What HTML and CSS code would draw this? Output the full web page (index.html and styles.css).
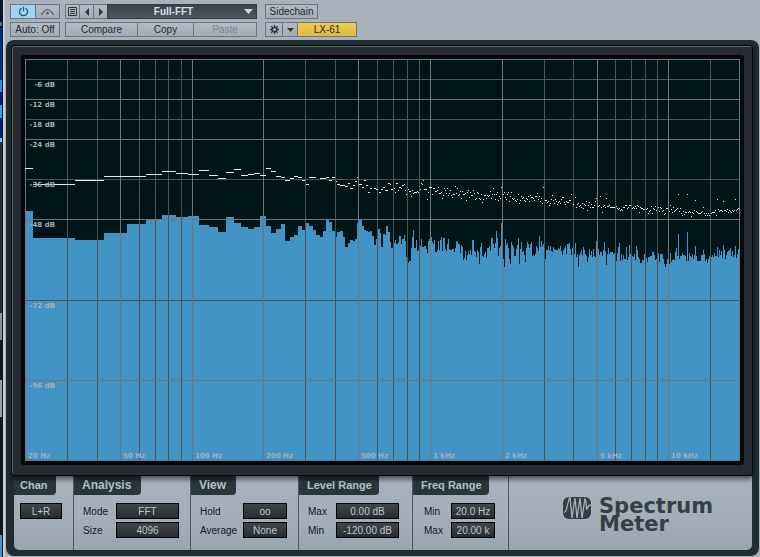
FILE: index.html
```html
<!DOCTYPE html>
<html lang="en">
<head>
  <meta charset="UTF-8">
  <meta name="viewport" content="width=device-width, initial-scale=1.0">
  <title>Spectrum Meter</title>
  <link rel="stylesheet" href="styles.css">
</head>
<body>
  <div class="desktop-edge"></div>
  <main class="plugin">
    <header class="toolbar">
      <div class="tool-col auto-col">
        <div class="group">
          <button class="btn power" aria-label="Power">
            <svg width="11" height="11" viewBox="0 0 11 11"><path d="M3.4 2.2a4 4 0 1 0 4.2 0M5.5 0.8v4.4" fill="none" stroke="#2c5878" stroke-width="1.3"/></svg>
          </button>
          <button class="btn curve" aria-label="Automation">
            <svg width="15" height="9" viewBox="0 0 15 9"><path d="M1 7.500C3.500 7 3.500 2.500 7.500 2.500S11.500 7 14 7.500" fill="none" stroke="#59616a" stroke-width="1.200"/><circle cx="7.500" cy="6" r="1.500" fill="#59616a"/></svg>
          </button>
        </div>
        <button class="btn">Auto: Off</button>
      </div>

      <div class="tool-col preset-col">
        <div class="group">
          <button class="btn icon" aria-label="Preset list">
            <svg width="9" height="9" viewBox="0 0 9 9"><path d="M.5 .5h8v8h-8zM2 2.500h5M2 4.500h5M2 6.500h5" fill="none" stroke="#30363d"/></svg>
          </button>
          <button class="btn icon" aria-label="Previous preset">
            <svg width="4" height="8" viewBox="0 0 4 8"><path d="M4 0v8L0 4z" fill="#30363d"/></svg>
          </button>
          <button class="btn icon" aria-label="Next preset">
            <svg width="4" height="8" viewBox="0 0 4 8"><path d="M0 0v8l4-4z" fill="#30363d"/></svg>
          </button>
          <div class="preset">
            <select aria-label="Preset"><option>Full-FFT</option></select>
            <svg class="arrow" width="9" height="5" viewBox="0 0 9 5"><path d="M0 0h9L4.500 5z" fill="#d5dade"/></svg>
          </div>
        </div>
        <div class="group">
          <button class="btn compare">Compare</button>
          <button class="btn copy">Copy</button>
          <button class="btn paste" disabled>Paste</button>
        </div>
      </div>

      <div class="tool-col">
        <button class="btn sidechain">Sidechain</button>
        <div class="group">
          <button class="btn gear" aria-label="Settings">
            <svg width="9" height="9" viewBox="0 0 9 9"><circle cx="4.500" cy="4.500" r="2.300" fill="none" stroke="#30363d" stroke-width="1.600"/><path d="M4.500 0v2M4.500 7v2M0 4.500h2M7 4.500h2M1.300 1.300l1.400 1.400M6.300 6.300l1.400 1.400M7.700 1.300L6.300 2.700M2.700 6.300L1.300 7.700" stroke="#30363d" stroke-width="1.300"/></svg>
          </button>
          <button class="btn drop" aria-label="Device menu">
            <svg width="7" height="4" viewBox="0 0 7 4"><path d="M0 0h7L3.500 4z" fill="#30363d"/></svg>
          </button>
          <button class="btn device">LX-61</button>
        </div>
      </div>
    </header>

    <section class="case">
      <div class="screen">
        <div class="plot">
          <svg class="graph" viewBox="25 59 715 402" preserveAspectRatio="none" shape-rendering="crispEdges">
            <path id="spectrum" class="spectrum"/>
            <g id="grid"></g>
            <path id="peaks" class="peaks"/>
          </svg>
          <div class="labels" id="labels"></div>
        </div>
      </div>

      <div class="controls">
        <fieldset class="box chan">
          <legend class="tab">Chan</legend>
          <div class="fields">
            <div class="field"><select class="short" aria-label="Channel"><option>L+R</option></select></div>
          </div>
        </fieldset>
        <fieldset class="box analysis">
          <legend class="tab big">Analysis</legend>
          <div class="fields">
            <div class="field"><label for="mode">Mode</label><select id="mode"><option>FFT</option></select></div>
            <div class="field"><label for="size">Size</label><select id="size"><option>4096</option></select></div>
          </div>
        </fieldset>
        <fieldset class="box view">
          <legend class="tab big">View</legend>
          <div class="fields">
            <div class="field"><label for="hold">Hold</label><input id="hold" class="short" type="text" value="oo"></div>
            <div class="field"><label for="average">Average</label><select id="average" class="short"><option>None</option></select></div>
          </div>
        </fieldset>
        <fieldset class="box level">
          <legend class="tab">Level Range</legend>
          <div class="fields">
            <div class="field"><label for="level-max">Max</label><input id="level-max" type="text" value="0.00 dB"></div>
            <div class="field"><label for="level-min">Min</label><input id="level-min" type="text" value="-120.00 dB"></div>
          </div>
        </fieldset>
        <fieldset class="box freq">
          <legend class="tab">Freq Range</legend>
          <div class="fields">
            <div class="field"><label for="freq-min">Min</label><input id="freq-min" class="short" type="text" value="20.0 Hz"></div>
            <div class="field"><label for="freq-max">Max</label><input id="freq-max" class="short" type="text" value="20.00 k"></div>
          </div>
        </fieldset>
        <div class="brand">
          <svg width="28" height="22" viewBox="0 0 28 22">
            <rect width="28" height="22" rx="6" fill="#353c42"/>
            <path d="M1 15C4 16 4 6 7 0l2 21L12 1l2 20L17 1l2 20L22 2c2 3 1 12 2 10s1-4 4-4" fill="none" stroke="#a8b1ba" stroke-width="1.300"/>
          </svg>
          <h1>Spectrum<br>Meter</h1>
        </div>
      </div>
    </section>
  </main>
  <script src="script.js"></script>
</body>
</html>
```
FILE: styles.css
```css
* {
  margin: 0;
  padding: 0;
  box-sizing: border-box;
}

body {
  display: flex;
  min-height: 100vh;
  background: #a9b1bb;
  font-family: "Liberation Sans", Arial, sans-serif;
  font-size: 10px;
}

/* what shows of the desktop beside the plugin window */
.desktop-edge {
  width: 3px;
  border-right: 1px solid #10151b;
  background: linear-gradient(#08172e 0 22px, #53677c 22px 26px, #08172e 26px 28px, #02318d 28px 80px, #2c8cf0 80px 92px, #001e70 92px 105px, #3c9cf5 105px 118px, #001e70 118px 138px, #5bd4f5 138px 142px, #282e38 142px 313px, #8c9298 313px 340px, #14181c 340px 380px, #9aa0a5 380px 417px, #12171d 417px 535px, #4a94c4 535px);
}

.plugin {
  flex: 1;
  min-width: 0;
  padding: 4px 1px 1px;
  border-left: 2px solid #c6ced6;
  background: #a9b1bb;
}

/* Toolbar */
.toolbar {
  display: flex;
  height: 36px;
  padding-left: 4px;
}

.tool-col {
  display: flex;
  flex-direction: column;
  gap: 3px;
}

.auto-col {
  width: 50px;
  margin-right: 5px;
}

.preset-col {
  width: 192px;
  margin-right: 8px;
}

.group {
  display: flex;
}

.group > * + * {
  margin-left: -1px;
}

.btn {
  display: flex;
  align-items: center;
  justify-content: center;
  height: 15px;
  border: 1px solid #6c747f;
  background: linear-gradient(#b3bbc4, #a3abb5);
  color: #24292f;
  font: inherit;
}

.power {
  width: 26px;
  background: #9fd3f0;
}

.curve {
  width: 25px;
}

.icon {
  width: 15px;
}

.preset {
  position: relative;
  flex: 1;
}

.preset select {
  width: 100%;
  height: 15px;
  padding-right: 17px;
  border-color: #343b43;
  background: linear-gradient(#3b4249, #4f565e);
  color: #dce0e4;
  font-weight: bold;
}

.arrow {
  position: absolute;
  top: 5px;
  right: 4px;
  pointer-events: none;
}

.compare {
  width: 73px;
}

.copy {
  width: 57px;
}

.paste {
  flex: 1;
  color: #7e8690;
}

.sidechain {
  width: 53px;
}

.gear {
  width: 18px;
}

.drop {
  width: 16px;
}

.device {
  width: 60px;
  background: linear-gradient(#eecb55, #e2b93d);
}

/* Case */
.case {
  padding: 5px 6px 6px 5px;
  border-radius: 8px;
  background: #202e31;
}

.screen {
  position: relative;
  padding: 9px 8px 10px 9px;
  border: 1px solid #06090b;
  border-radius: 3px;
  background: #262b32;
  box-shadow: inset 1px 1px #5a6266, 0 3px 5px rgba(0, 0, 0, 0.6);
}

.plot {
  position: relative;
  padding: 4px;
  border-radius: 3px;
  background: #04090d;
}

.graph {
  display: block;
  width: 100%;
  height: 402px;
  background: #001518;
}

.spectrum {
  fill: #4294c6;
}

.peaks {
  fill: #d4effb;
}

.minor {
  fill: #515152;
}

.major {
  fill: #777372;
}

.labels {
  position: absolute;
  inset: 4px;
}

.scale {
  position: absolute;
  color: #a4aeb8;
  font: bold 7px/9px "DejaVu Sans", Verdana, sans-serif;
  white-space: nowrap;
}

.scale.db {
  left: 0;
  width: 30px;
  text-align: right;
}

/* Controls */
.controls {
  display: flex;
  margin: 0 1px 0 3px;
  border-radius: 0 0 5px 5px;
  background: linear-gradient(#a9b3bd, #a4adb7 60%, #9ba5af);
}

.box {
  min-width: 0;
  height: 74px;
  border: 0;
  border-right: 1px solid #4c575d;
}

.chan {
  width: 60px;
}

.analysis {
  width: 117px;
}

.view {
  width: 108px;
}

.level {
  width: 114px;
}

.freq {
  width: 96px;
}

.tab {
  float: left;
  height: 19px;
  padding: 0 7px 0 8px;
  border-radius: 0 0 4px 0;
  background: #2b363b;
  color: #b4c1c6;
  font-size: 11px;
  font-weight: bold;
  line-height: 19px;
}

.tab.big {
  padding-right: 10px;
  font-size: 12px;
}

.chan .tab {
  padding: 0 8px 0 6px;
}

.fields {
  display: flex;
  flex-direction: column;
  clear: both;
  gap: 3px;
  padding: 8px 11px 0 9px;
}

.chan .fields {
  padding-left: 6px;
}

.level .fields,
.freq .fields {
  padding-right: 13px;
}

.freq .fields {
  padding-left: 11px;
}

.field {
  display: flex;
  align-items: center;
  justify-content: space-between;
  color: #14181c;
}

select,
input {
  appearance: none;
  width: 63px;
  height: 16px;
  border: 1px solid #000;
  border-radius: 0;
  background: linear-gradient(#41464b, #282c31);
  color: #bdc6cd;
  font: inherit;
  text-align: center;
  text-align-last: center;
}

.short {
  width: 44px;
}

.brand {
  display: flex;
  flex: 1;
  gap: 8px;
  padding: 21px 0 0 54px;
}

.brand svg {
  flex: none;
}

.brand h1 {
  color: #353f44;
  font: bold 21px/18px "DejaVu Sans", Verdana, sans-serif;
}
```
FILE: script.js
```javascript
// left edge and top of every FFT bin, the low bins are wider
const lowBins = '25,211 33,238 75,240 104,233 127,224 146,220 162,215 176,217 188,216 199,225 209,227 218,232 226,217 234,223 241,227 248,229 254,227 260,216 266,226 271,233 276,229 281,224 285,241 290,237 294,235 298,226 302,230 306,223 309,226 313,230 316,235 320,237 323,231 326,220 329,222 332,231 336,237 337,232 340,231 343,237 345,247 348,243 350,240 353,241 355,239 357,223 359,220 362,226 364,230 366,231 368,232 370,231 372,236 374,245 376,239 378,229 380,233 381,247 383,234 385,235 386,226 388,232 390,242 391,248 394,243 395,240 396,244 398,242 399,236 401,244 402,239 404,235 405,241 406,257 407,263 409,261 411,248 412,237 413,230 414,248 416,240 417,251 418,250 420,246 421,239 422,247 424,246 426,249 427,253 428,241 429,239 431,237 432,242 433,244 434,240 435,252 437,250 438,241 439,250 440,240 441,237 442,251 443,238 445,249 446,251 447,244 448,239 449,249 450,250 452,249 454,252 455,248 456,241 457,242 458,244 460,253 461,245 462,247 463,260 464,258 465,251 466,260 467,255 468,251 469,254 470,250 471,255 472,240 474,251 475,252 476,257 477,250 478,252 479,264 480,247 481,243 482,256 483,257 484,254 485,252 486,258 487,248 489,246 490,251 491,238 493,244 494,248 495,243 496,231 497,238 498,256 499,248';

// one value for each column from 500 on
const highBins = '246 223 223 259 267 239 245 243 248 259 264 242 245 247 256 256 249 245 238 264 249 242 252 251 255 262 248 242 244 248 244 242 256 255 256 254 246 248 251 236 247 241 246 244 244 259 250 250 246 250 246 251 252 247 249 250 250 250 248 249 246 251 255 250 248 246 254 244 244 243 249 255 248 254 254 243 257 254 267 255 253 250 255 247 250 254 256 262 257 249 255 251 257 249 256 257 241 249 249 255 252 252 256 250 242 251 265 254 248 254 252 252 252 254 253 254 261 253 247 243 261 254 260 255 259 259 247 260 257 245 254 254 256 257 254 260 246 250 257 259 263 263 260 260 254 254 258 262 257 257 256 256 252 252 255 260 259 253 253 262 254 254 254 259 264 267 264 259 259 264 253 262 260 259 260 252 248 256 234 259 256 256 253 255 255 256 261 232 261 253 256 257 254 259 255 246 256 261 261 261 261 255 255 250 254 261 259 263 259 256 256 257 255 257 253 256 256 247 257 250 255 251 258 245 250 259 255 252 251 250 248 256 251 257 255 246 258 254 249 249';

// x, width, y of the held peaks
const lowPeaks = '25,8,168 33,42,184 75,29,180 104,42,176 146,16,174 162,14,171 176,12,173 188,11,174 199,10,170 209,9,175 218,8,178 226,8,172 234,7,169 241,7,175 248,6,174 254,6,173 260,6,175 266,5,168 271,5,171 276,5,176 281,4,177 285,5,180 290,4,178 294,4,176 298,4,177 302,3,180 306,3,184 309,7,177 320,6,178 326,3,177 329,3,180 332,3,177 336,1,181 337,3,184 340,5,185 345,3,186 348,2,183 350,3,188 353,2,185 355,2,181 357,1,177 359,3,184 362,2,187 364,2,180 366,2,185 368,2,192 370,2,188 374,2,188 376,2,189 379,2,192 381,2,189 383,2,187 385,3,190 388,2,183 390,1,184 391,2,189 394,1,188 395,1,192 396,2,183 398,1,190 399,2,187 401,1,188 402,2,185 404,1,184 405,1,190 406,1,194 408,1,189 409,2,191 411,1,196 412,1,190 413,1,193 414,3,192 417,1,191 418,1,192 420,1,189 421,1,183 422,1,184 423,1,180 424,3,189 427,1,199 428,1,192 429,3,187 432,1,194 433,2,188 435,2,191 437,1,190 438,1,187 439,2,193 441,1,192 442,1,198 443,1,195 444,1,188 445,1,190 446,1,193 447,1,188 448,1,195 449,1,193 450,1,190 451,1,195 452,1,197 453,2,194 455,1,186 456,1,193 457,1,188 458,1,195 459,1,194 460,1,191 461,1,198 462,1,191 463,2,194 465,1,193 466,1,200 467,1,192 468,1,190 469,1,197 470,1,192 471,2,195 473,1,190 474,1,193 475,1,199 476,1,198 477,1,192 478,1,193 479,1,198 480,1,199 481,1,194 482,1,202 483,1,199 484,2,195 486,1,198 487,1,195 488,1,196 489,1,195 490,1,191 491,1,198 492,1,194 493,1,188 494,1,194 495,1,199 496,1,194 497,1,192 498,1,200 499,1,196';

// 0 is a column without a peak
const highPeaks = '198 187 0 194 192 197 199 194 192 201 196 192 198 199 198 200 201 199 194 203 200 196 198 197 200 201 198 199 196 201 195 197 197 198 200 196 196 193 199 196 201 198 203 187 0 200 200 202 201 205 203 199 195 200 203 199 201 204 202 201 203 199 197 197 202 204 201 202 202 200 200 194 0 204 0 197 207 204 203 206 205 207 203 208 204 205 201 210 205 202 207 204 207 207 205 201 198 0 206 205 196 207 212 206 205 207 198 206 206 205 207 207 207 207 207 0 206 208 209 208 210 209 210 207 207 205 205 208 207 205 205 0 208 207 208 206 208 205 206 212 207 208 208 209 209 0 209 208 213 211 210 206 213 208 209 206 210 0 207 211 207 208 211 210 214 213 208 208 0 211 205 209 212 207 211 210 209 208 194 211 208 213 215 211 214 212 212 194 212 211 212 216 212 213 210 200 211 212 213 213 213 212 211 207 213 215 213 215 213 215 0 213 212 212 212 210 215 199 209 211 210 210 211 201 210 210 211 209 212 210 211 212 210 211 210 199 210 209 208';

const left = 25, top0 = 59, width = 715, height = 402;

// Filled spectrum
let d = 'M25 461';
lowBins.split(' ').forEach(pair => {
  const [x, y] = pair.split(',');
  d += `H${x}V${y}`;
});
highBins.split(' ').forEach((y, i) => {
  d += `H${500 + i}V${y}`;
});
document.getElementById('spectrum').setAttribute('d', d + 'H740V461Z');

// Peak hold
let p = '';
lowPeaks.split(' ').forEach(item => {
  const [x, w, y] = item.split(',');
  p += `M${x} ${y}h${w}v1h-${w}z`;
});
highPeaks.split(' ').forEach((y, i) => {
  if (y !== '0') p += `M${500 + i} ${y}h1v1h-1z`;
});
document.getElementById('peaks').setAttribute('d', p);

// Grid
const grid = document.getElementById('grid');

function addLine(x, y, w, h, type) {
  const line = document.createElementNS('http://www.w3.org/2000/svg', 'rect');
  line.setAttribute('x', x);
  line.setAttribute('y', y);
  line.setAttribute('width', w);
  line.setAttribute('height', h);
  line.setAttribute('class', type);
  grid.appendChild(line);
}

[67, 97, 139, 155, 168, 181, 305, 335, 377, 393, 407, 419, 544, 573, 615, 631, 645, 657, 710]
  .forEach(x => addLine(x, top0, 1, height, 'minor'));
[79, 119, 179, 300].forEach(y => addLine(left, y, width, 1, 'minor'));
[25, 120, 192, 263, 358, 430, 502, 597, 668, 739]
  .forEach(x => addLine(x, top0, 1, height, 'major'));
[59, 99, 139, 219, 380, 460].forEach(y => addLine(left, y, width, 1, 'major'));

// Scale labels
const labels = document.getElementById('labels');

function addLabel(text, type) {
  const label = document.createElement('span');
  label.className = 'scale ' + type;
  label.textContent = text;
  labels.appendChild(label);
  return label;
}

[[79, -6], [99, -12], [119, -18], [139, -24], [179, -36], [219, -48], [300, -72], [380, -96]].forEach(([y, db]) => {
  addLabel(db + ' dB', 'db').style.top = (y - top0 + 2) + 'px';
});
[[25, '20 Hz'], [120, '50 Hz'], [192, '100 Hz'], [263, '200 Hz'], [358, '500 Hz'], [430, '1 kHz'], [502, '2 kHz'], [597, '5 kHz'], [668, '10 kHz']].forEach(([x, text]) => {
  const label = addLabel(text, 'hz');
  label.style.left = `calc(${(x - left) / width * 100}% + 3px)`;
  label.style.bottom = '0';
});
```
